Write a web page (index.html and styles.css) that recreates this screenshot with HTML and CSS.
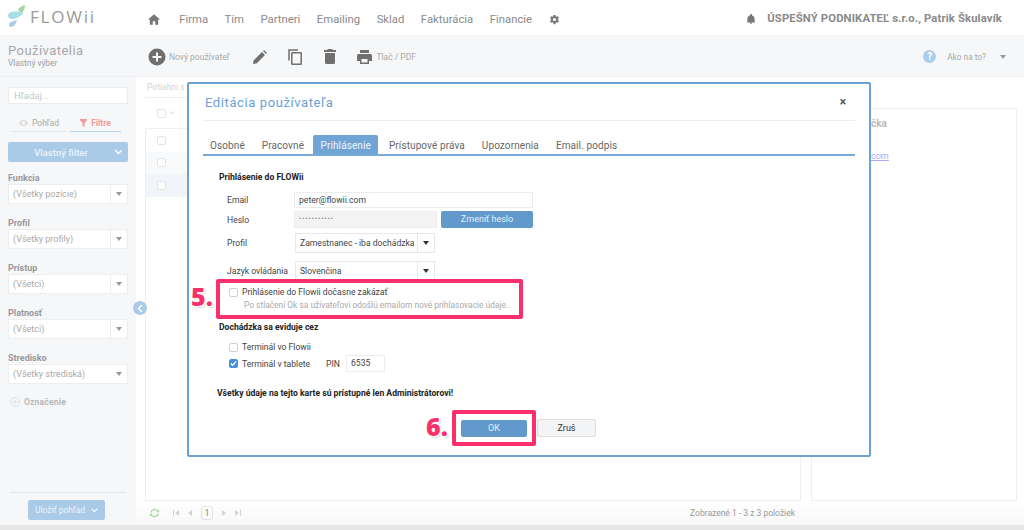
FILE: index.html
```html
<!DOCTYPE html>
<html lang="sk">
<head>
<meta charset="utf-8">
<title>Používatelia</title>
<link rel="stylesheet" href="styles.css">
</head>
<body>
<div class="app">
  <header class="topbar">
    <div class="logo">
      <svg class="logo-mark" width="18" height="22" viewBox="0 0 18 22"><path d="M10 4C12 2 14 1 17 0c0 4-2 8-5 8z" fill="#a5d6a0"/><path d="M0 11c0-4 6-6 16-3-4 3-7 6-11 6-3 0-5-1-5-3z" fill="#a8dde6"/><path d="M1 20c0-3 4-4 8-5-1 4-3 7-6 7-1.500 0-2-1-2-2z" fill="#a9cfe8"/></svg>
      <span class="logo-text">FLOWii</span>
    </div>
    <nav class="nav">
      <svg class="home" width="12" height="11" viewBox="0 0 16 14"><path d="M8 0L0 7h2.400v7h4V9.400h3.200V14h4V7H16z" fill="#777"/></svg>
      <a>Firma</a><a>Tím</a><a>Partneri</a><a>Emailing</a><a>Sklad</a><a>Fakturácia</a><a>Financie</a>
      <svg class="gear" width="11" height="11" viewBox="0 0 24 24"><path d="M19.400 13a7.500 7.500 0 0 0 0-2l2.500-2-2.500-4.300-3 1.200a7.500 7.500 0 0 0-1.700-1L14.300 2H9.700l-.4 3a7.500 7.500 0 0 0-1.700 1l-3-1.200L2.100 9l2.500 2a7.500 7.500 0 0 0 0 2l-2.500 2 2.500 4.300 3-1.200c.5.400 1.100.7 1.700 1l.4 3h4.600l.4-3c.6-.3 1.200-.6 1.700-1l3 1.200 2.500-4.300zM12 15.500a3.500 3.500 0 1 1 0-7 3.500 3.500 0 0 1 0 7z" fill="#777"/></svg>
    </nav>
    <div class="user">
      <svg width="8" height="10" viewBox="0 0 18 22"><path d="M9 22a2.500 2.500 0 0 0 2.500-2.500h-5A2.500 2.500 0 0 0 9 22zm8-6V10c0-3.500-2-6.300-5.500-7V1.500a2.500 1.500 0 0 0-5 0V3C3 3.700 1 6.500 1 10v6l-1 2v1h18v-1z" fill="#777"/></svg>
      <strong>ÚSPEŠNÝ PODNIKATEĽ s.r.o., Patrik Škulavík</strong>
    </div>
  </header>

  <section class="toolbar">
    <div class="page-title">
      <div class="title">Používatelia</div>
      <div class="subtitle">Vlastný výber</div>
    </div>
    <div class="tools">
      <span class="tool tool-new">
        <svg width="18" height="18" viewBox="0 0 18 18"><circle cx="9" cy="9" r="8.500" fill="#6e6e6e"/><path d="M9 4.500v9M4.500 9h9" stroke="#f6f7f9" stroke-width="2"/></svg>
        <span>Nový používateľ</span>
      </span>
      <svg class="tool-pen" width="14" height="14" viewBox="0 0 14 14"><path d="M0 14l.5-3.500L9 2l3 3-8.500 8.500zM10 1l1-1 3 3-1 1z" fill="#707070"/></svg>
      <svg class="tool-copy" width="14" height="16" viewBox="0 0 14 16"><path d="M1 11.500V1h9" fill="none" stroke="#707070" stroke-width="1.500"/><rect x="3.800" y="3.800" width="9.400" height="11.400" rx=".5" fill="none" stroke="#707070" stroke-width="1.500"/></svg>
      <svg class="tool-trash" width="12" height="15" viewBox="0 0 12 15"><path d="M4 0h4l1 1h3v2H0V1h3zM1 4h10v9.500a1.500 1.500 0 0 1-1.500 1.500h-7A1.500 1.500 0 0 1 1 13.500z" fill="#707070"/></svg>
      <span class="tool tool-print">
        <svg width="15" height="14" viewBox="0 0 15 14"><path d="M3 0h9v3H3zM1.500 4h12A1.500 1.500 0 0 1 15 5.500V11h-3v3H3v-3H0V5.500A1.500 1.500 0 0 1 1.500 4zM4.500 9v3.500h6V9z" fill="#707070"/></svg>
        <span>Tlač / PDF</span>
      </span>
    </div>
    <div class="help">
      <span class="help-icon">?</span>
      <span>Ako na to?</span>
      <i class="caret caret-gray"></i>
    </div>
  </section>

  <main class="main">
    <aside class="sidebar">
      <div class="search">Hľadaj...</div>
      <div class="view-tabs">
        <span class="vt">
          <svg width="9" height="6" viewBox="0 0 18 12"><path d="M9 0C5 0 2 2.500 0 6c2 3.500 5 6 9 6s7-2.500 9-6c-2-3.500-5-6-9-6zm0 9.500a3.500 3.500 0 1 1 0-7 3.500 3.500 0 0 1 0 7z" fill="#ddd"/></svg>
          Pohľad
        </span>
        <span class="vt vt-active">
          <svg width="7" height="8" viewBox="0 0 14 16"><path d="M0 0h14v2.500L9 8v8l-4-2V8L0 2.500z" fill="#f59a9a"/></svg>
          Filtre
        </span>
      </div>
      <div class="filter-btn">
        <span>Vlastný filter</span>
        <svg width="9" height="6" viewBox="0 0 9 6"><path d="M1 1l3.500 3.500L8 1" fill="none" stroke="#fff" stroke-width="1.400"/></svg>
      </div>
      <div class="field">
        <label>Funkcia</label>
        <div class="combo"><span>(Všetky pozície)</span><b><i class="caret caret-gray"></i></b></div>
      </div>
      <div class="field">
        <label>Profil</label>
        <div class="combo"><span>(Všetky profily)</span><b><i class="caret caret-gray"></i></b></div>
      </div>
      <div class="field">
        <label>Prístup</label>
        <div class="combo"><span>(Všetci)</span><b><i class="caret caret-gray"></i></b></div>
      </div>
      <div class="field">
        <label>Platnosť</label>
        <div class="combo"><span>(Všetci)</span><b><i class="caret caret-gray"></i></b></div>
      </div>
      <div class="field">
        <label>Stredisko</label>
        <div class="combo combo-plain"><span>(Všetky strediská)</span><b><i class="caret caret-gray"></i></b></div>
      </div>
      <div class="mark">
        <svg width="10" height="10" viewBox="0 0 10 10"><circle cx="5" cy="5" r="4.500" fill="none" stroke="#ddd"/><path d="M5 2.500v5M2.500 5h5" stroke="#ddd"/></svg>
        Označenie
      </div>
      <div class="save-wrap">
        <div class="save-btn">Uložiť pohľad
          <svg width="7" height="5" viewBox="0 0 9 6"><path d="M1 1l3.500 3.500L8 1" fill="none" stroke="#fff" stroke-width="1.400"/></svg>
        </div>
      </div>
    </aside>

    <section class="content">
      <div class="content-body">
        <div class="grid-col">
          <div class="drag-hint">Potiahni s</div>
          <div class="grid-head"><i class="check"></i><svg width="6" height="4" viewBox="0 0 9 6"><path d="M1 1l3.500 3.500L8 1" fill="none" stroke="#ccc" stroke-width="1.200"/></svg></div>
          <div class="grid-box">
            <div class="grid-row"><i class="check"></i></div>
            <div class="grid-row row-alt"><i class="check"></i></div>
            <div class="grid-row row-sel"><i class="check"></i></div>
          </div>
        </div>
        <div class="detail">
          <div class="detail-name">čka</div>
          <a class="detail-link">com</a>
        </div>
      </div>
      <footer class="pager">
        <svg class="refresh" width="11" height="10" viewBox="0 0 13 11"><path d="M2 5a4.500 4.500 0 0 1 8-2M11 6a4.500 4.500 0 0 1-8 2" fill="none" stroke="#a8d8a0" stroke-width="1.500"/><path d="M12 1v3.500H8.500zM1 10V6.500h3.500z" fill="#a8d8a0"/></svg>
        <svg width="6" height="6" viewBox="0 0 6 6"><path d="M0 0h1v6H0zM6 0v6L2 3z" fill="#d4d4d4"/></svg>
        <svg width="4" height="6" viewBox="0 0 4 6"><path d="M4 0v6L0 3z" fill="#d4d4d4"/></svg>
        <span class="pg-num">1</span>
        <svg width="4" height="6" viewBox="0 0 4 6"><path d="M0 0v6l4-3z" fill="#d4d4d4"/></svg>
        <svg width="6" height="6" viewBox="0 0 6 6"><path d="M0 0v6l4-3zM5 0h1v6H5z" fill="#d4d4d4"/></svg>
        <span class="pg-info">Zobrazené 1 - 3 z 3 položiek</span>
      </footer>
    </section>
    <span class="collapse">
      <svg width="6" height="9" viewBox="0 0 6 9"><path d="M5 1L1.500 4.500 5 8" fill="none" stroke="#fff" stroke-width="1.600"/></svg>
    </span>
  </main>
</div>

<div class="modal">
  <div class="modal-head">
    <h2>Editácia používateľa</h2>
    <span class="close">×</span>
  </div>
  <div class="tabs">
    <span>Osobné</span><span>Pracovné</span><span class="tab-active">Prihlásenie</span><span>Prístupové práva</span><span>Upozornenia</span><span>Email. podpis</span>
  </div>
  <div class="modal-body">
    <div class="section-title">Prihlásenie do FLOWii</div>
    <div class="form-row row-email"><label>Email</label><div class="input input-wide">peter@flowii.com</div></div>
    <div class="form-row row-pass"><label>Heslo</label><div class="input input-off">•••••••••••</div><span class="btn btn-pass">Zmeniť heslo</span></div>
    <div class="form-row row-profile"><label>Profil</label><div class="select"><span>Zamestnanec - iba dochádzka</span><b><i class="caret"></i></b></div></div>
    <div class="form-row row-lang"><label>Jazyk ovládania</label><div class="select"><span>Slovenčina</span><b><i class="caret"></i></b></div></div>
    <div class="disable-block">
      <div class="check-row"><i class="check check-strong"></i><span>Prihlásenie do Flowii dočasne zakázať</span></div>
      <div class="note">Po stlačení Ok sa užívateľovi odošlú emailom nové prihlasovacie údaje.</div>
    </div>
    <div class="section-title attend">Dochádzka sa eviduje cez</div>
    <div class="check-row row-term"><i class="check check-strong"></i><span>Terminál vo Flowii</span></div>
    <div class="check-row row-tablet"><i class="check check-on"><svg width="8" height="7" viewBox="0 0 8 7"><path d="M1 3.500L3 5.500 7 1" fill="none" stroke="#fff" stroke-width="1.400"/></svg></i><span>Terminál v tablete</span><span class="pin-label">PIN</span><div class="input input-pin">6535</div></div>
    <div class="admin-note">Všetky údaje na tejto karte sú prístupné len Administrátorovi!</div>
    <div class="actions"><span class="btn btn-ok">OK</span><span class="btn-cancel">Zruš</span></div>
  </div>
</div>

<div class="callout callout-5"></div>
<div class="callout callout-6"></div>
<span class="step step-5">5.</span>
<span class="step step-6">6.</span>
</body>
</html>
```

FILE: styles.css
```css
* { box-sizing: border-box; }
html, body { margin: 0; height: 530px; overflow: hidden; }
body { position: relative; width: 1024px; font-family: Roboto, "Liberation Sans", sans-serif; color: #555; background: linear-gradient(#efefef, #e6e6e6); }
.app { display: flex; flex-direction: column; height: 525px; background: #f6f7f9; }

.topbar { display: flex; align-items: center; height: 35px; background: #fff; flex: none; }
.logo { display: flex; align-items: center; width: 148px; height: 100%; padding: 0 0 3px 8px; gap: 4px; }
.logo-text { font: 400 17px "Open Sans", sans-serif; letter-spacing: 1.800px; color: #9a9a9a; }
.nav { display: flex; align-items: center; padding-top: 3px; font-size: 11.300px; color: #8a8a8a; gap: 16.500px; }
.nav .home { margin-right: 2.700px; }
.nav a { display: block; }
.user { display: flex; align-items: center; gap: 12px; margin-left: auto; padding: 2px 22px 0 0; font-size: 11.300px; color: #8a8a8a; }
.user strong { font-weight: 700; letter-spacing: .12px; }

.toolbar { display: flex; align-items: center; height: 42px; flex: none; background: #f6f7f9; border-bottom: 1px solid #f0f0f2; }
.page-title { width: 148px; padding-left: 8px; }
.title { font: 400 13px/15px Roboto, sans-serif; letter-spacing: .45px; color: #a8a8a8; }
.subtitle { font-size: 8.300px; line-height: 11px; color: #a0a0a0; }
.tools { display: flex; align-items: center; padding-top: 2px; }
.tool { display: flex; align-items: center; gap: 3px; font-size: 8.500px; color: #aaa; }
.tool-pen { margin-left: 24px; }
.tool-copy { margin-left: 21px; }
.tool-trash { margin-left: 22px; }
.tool-print { margin-left: 21px; gap: 4px; }
.help { display: flex; align-items: center; margin-left: auto; padding: 2px 18px 0 0; font-size: 8.300px; color: #a8a8a8; gap: 11px; }
.help-icon { width: 13px; height: 13px; border-radius: 50%; background: #a9cdec; color: #fff; font: 700 10px/13px Roboto, sans-serif; text-align: center; }
.caret { display: block; width: 0; height: 0; border-left: 3.500px solid transparent; border-right: 3.500px solid transparent; border-top: 4px solid #333; }
.caret-gray { border-top-color: #999; }
.help .caret { margin-left: 3px; }

.main { position: relative; display: flex; flex: 1; min-height: 0; }
.sidebar { display: flex; flex-direction: column; width: 136px; flex: none; padding: 10px 8px 0; background: #f6f7f9; }
.search { height: 17px; padding-left: 5px; background: #fff; border: 1px solid #ececee; font-size: 9.500px; line-height: 15px; color: #c8c8c8; }
.view-tabs { display: flex; margin-top: 7px; gap: 3px; font-size: 8.500px; }
.vt { display: flex; align-items: center; justify-content: center; gap: 4px; height: 21px; padding-top: 4px; color: #aaa; border-bottom: 1px solid #e6e6e8; }
.vt:first-child { width: 56px; margin-left: 3px; }
.vt-active { width: 51px; color: #f59a9a; font-weight: 700; border-bottom-color: #b4d2ee; }
.filter-btn { display: flex; align-items: center; flex: none; height: 20px; margin-top: 10px; padding: 0 5px 0 0; background: #a9cbe8; border-radius: 2px; color: #e9f2fa; font-size: 9.500px; font-weight: 500; }
.filter-btn span { flex: 1; text-align: center; }
.field { margin-top: 12px; }
.filter-btn + .field { margin-top: 9px; }
.field label { display: block; height: 12px; font-size: 9px; line-height: 14px; font-weight: 700; color: #999; }
.combo { display: flex; align-items: center; height: 20px; margin-top: 1px; background: #fff; border: 1px solid #eeeeee; font-size: 9px; color: #aaa; }
.combo span { flex: 1; padding-left: 4px; }
.combo b { display: flex; align-items: center; justify-content: center; width: 17px; height: 100%; border-left: 1px solid #eeeeee; }
.combo-plain b { border-left: 0; }
.mark { display: flex; align-items: center; gap: 4px; margin-top: 13px; padding-left: 2px; font-size: 8.500px; font-weight: 700; color: #b8b8b8; letter-spacing: .2px; }
.save-wrap { margin: auto 2px 5px; padding: 7px 0 0 18px; border-top: 1px solid #e6e6e8; }
.save-btn { display: flex; align-items: center; justify-content: center; gap: 6px; width: 77px; height: 20px; background: #a9cbe8; border-radius: 2px; color: #e9f2fa; font-size: 8.500px; }

.content { display: flex; flex-direction: column; flex: 1; min-width: 0; background: #fff; }
.content-body { display: flex; flex: 1; min-height: 0; padding-left: 9px; padding-right: 7px; gap: 10px; }
.grid-col { display: flex; flex-direction: column; width: 656px; }
.drag-hint { height: 21px; padding: 5px 2px 0; font-size: 8.500px; color: #d4d4d4; border-bottom: 1px solid #efefef; }
.grid-head { display: flex; align-items: center; gap: 3px; height: 30px; padding-left: 12px; }
.grid-box { flex: 1; background: #fff; border: 1px solid #efefef; }
.grid-row { display: flex; align-items: center; height: 22.500px; padding-left: 11px; }
.row-alt { background: #f8f9fb; }
.row-sel { background: #f1f4f8; }
.check { display: block; flex: none; width: 9px; height: 9px; background: #fff; border: 1px solid #e4e4e4; border-radius: 2px; }
.detail { flex: 1; margin-top: 31px; background: #fff; border: 1px solid #efefef; font-size: 9px; }
.detail-name { padding: 9px 0 0 59px; font-size: 10px; font-weight: 700; color: #bbb; }
.detail-link { display: block; padding: 22px 0 0 59px; color: #a9a9f5; text-decoration: underline; }
.pager { display: flex; align-items: center; gap: 9px; height: 24px; flex: none; padding-left: 13px; padding-right: 229px; background: linear-gradient(#fff, #f8f8f8); font-size: 8.500px; color: #b8b8b8; }
.pg-num { width: 12px; height: 14px; border: 1px solid #e2e2e2; border-radius: 3px; text-align: center; line-height: 12px; color: #888; font-size: 9px; }
.refresh { margin-right: 4px; }
.pg-info { margin-left: auto; color: #999; }
.collapse { position: absolute; left: 133px; top: 224px; display: flex; align-items: center; justify-content: center; width: 14px; height: 14px; border-radius: 50%; background: #a9cbe8; }

.modal { position: absolute; left: 187px; top: 82px; width: 684px; height: 375px; padding: 0 14px; background: #fff; border: 2px solid #6aa2d4; border-radius: 2px; color: #444; }
.modal-head { display: flex; align-items: center; justify-content: space-between; height: 37px; padding-left: 2px; border-bottom: 1px solid #eeeeee; }
.modal-head h2 { margin: 0; font: 400 13px Roboto, sans-serif; letter-spacing: .6px; color: #6aa2d4; }
.close { padding-right: 9px; font-size: 12px; font-weight: 700; color: #555; line-height: 1; }
.tabs { display: flex; align-items: flex-end; height: 35px; padding-top: 15px; border-bottom: 2px solid #78a9d7; font-size: 10px; color: #666; }
.tabs span { display: block; padding: 2px 8.500px 0; height: 18px; line-height: 15px; letter-spacing: .1px; }
.tabs span:first-child { padding-left: 7px; }
.tabs .tab-active { height: 19px; padding: 3px 7px 0 8px; background: #70a4d5; color: #eef5fb; border-radius: 2px 2px 0 0; margin-right: 2.500px; }
.modal-body { font-size: 8.600px; color: #444; }
.section-title { padding: 16px 0 0 16px; font-size: 8.600px; font-weight: 700; color: #222; height: 36px; }
.form-row { display: flex; align-items: center; padding-left: 24px; }
.form-row label { width: 67px; flex: none; }
.row-email { height: 16px; }
.row-pass { height: 17px; margin-top: 3px; }
.row-profile { height: 20px; margin-top: 5px; }
.row-lang { height: 19px; margin-top: 8px; }
.input { height: 100%; background: #fff; border: 1px solid #ececec; line-height: 14px; padding-left: 4px; }
.input-wide { width: 239px; }
.input-off { width: 143px; background: #f3f3f3; color: #888; font-size: 7px; letter-spacing: .8px; }
.btn { display: block; background: #6299cc; color: #e4f0fa; border-radius: 2px; text-align: center; }
.btn-pass { width: 92px; height: 17px; margin-left: 4px; line-height: 16px; font-size: 9px; }
.select { display: flex; align-items: center; width: 140px; height: 100%; margin-left: 1px; border: 1px solid #e8e8e8; }
.select span { flex: 1; padding-left: 4px; white-space: nowrap; }
.select b { display: flex; align-items: center; justify-content: center; flex: none; width: 17px; height: 100%; border-left: 1px solid #e8e8e8; }
.disable-block { height: 40px; padding: 6px 0 0 26px; }
.check-row { display: flex; align-items: center; gap: 4px; height: 12px; }
.check-strong { border-color: #d0d0d0; }
.note { margin-top: 2px; padding-left: 15px; line-height: 11px; color: #aaa; font-size: 8.400px; }
.section-title.attend { height: 20px; padding: 0 0 0 16px; line-height: 12px; margin-top: 1px; }
.row-term { margin-left: 26px; }
.row-tablet { margin-left: 26px; margin-top: 2px; height: 17px; }
.check-on { display: flex; align-items: center; justify-content: center; background: #4a90d9; border-color: #4a90d9; }
.pin-label { margin-left: 12px; }
.input-pin { width: 39px; height: 17px; margin-left: 2px; }
.admin-note { padding: 16px 0 0 14px; line-height: 10px; font-size: 8.600px; font-weight: 700; color: #222; }
.actions { display: flex; align-items: center; gap: 10px; margin-top: 21px; padding-left: 258px; }
.btn-ok { width: 66px; height: 17px; line-height: 17px; font-size: 9px; }
.btn-cancel { width: 59px; height: 18px; background: #f3f4f6; border: 1px solid #ddd; border-radius: 2px; text-align: center; line-height: 16px; font-size: 9px; color: #333; }

.callout { position: absolute; border: 4px solid #f9306c; border-radius: 2px; }
.callout-5 { left: 216px; top: 279px; width: 307px; height: 40px; }
.callout-6 { left: 452px; top: 410px; width: 84px; height: 36px; }
.step { position: absolute; font: 800 25px/1 "Open Sans", sans-serif; color: #f9306c; text-shadow: 1px 1px 0 #fff, -1px -1px 0 #fff, 1px -1px 0 #fff, -1px 1px 0 #fff, 2px 2px 1px #ddd; }
.step-5 { left: 191px; top: 284px; }
.step-6 { left: 426px; top: 414px; }
```
